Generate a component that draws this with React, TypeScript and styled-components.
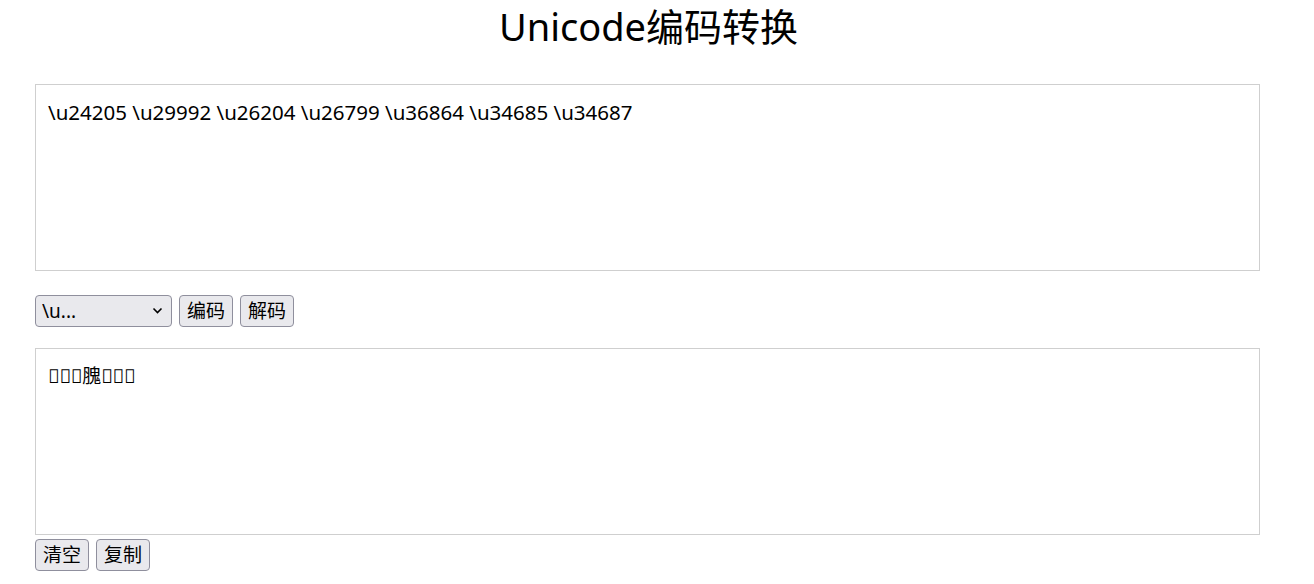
import React, { useState } from "react";
import styled, { createGlobalStyle } from "styled-components";

const GlobalStyle = createGlobalStyle`
  html, body {
    margin: 0;
    padding: 0;
    background: #ffffff;
  }
  body {
    font-family: "Noto Sans", "Noto Sans CJK SC", sans-serif;
    color: #000;
  }
`;

const FONT = `"Noto Sans", "Noto Sans CJK SC", sans-serif`;

/* =========================
   LAYOUT
========================= */

const Page = styled.main`
  width: 1297px;
  padding-top: 1px;
`;

const Title = styled.h1`
  margin: 0;
  height: 52px;
  line-height: 50px;
  text-align: center;
  font-size: 38px;
  font-weight: 400;
  font-family: ${FONT};
`;

const Content = styled.div`
  margin: 31px 0 0 35px;
  width: 1225px;
  display: flex;
  flex-direction: column;
`;

const TextBox = styled.textarea<{ $size: number }>`
  box-sizing: border-box;
  width: 1225px;
  height: 187px;
  margin: 0;
  padding: 14px 12px 10px;
  border: 1px solid #cfcfcf;
  border-radius: 0;
  resize: none;
  outline: none;
  font-family: ${FONT};
  font-size: ${(p) => p.$size}px;
  line-height: 26px;
  color: #000;
`;

const Toolbar = styled.div<{ $top: number; $bottom: number }>`
  display: flex;
  align-items: center;
  gap: 7px;
  margin: ${(p) => p.$top}px 0 ${(p) => p.$bottom}px;
`;

const SelectWrap = styled.div`
  position: relative;
  width: 137px;
  height: 32px;
`;

const Select = styled.select`
  appearance: none;
  box-sizing: border-box;
  width: 100%;
  height: 100%;
  padding: 0 24px 0 6px;
  background: #e9e9ed;
  border: 1px solid #8f8f9d;
  border-radius: 4px;
  font-family: ${FONT};
  font-size: 19px;
  color: #000;
`;

const Chevron = styled.svg`
  position: absolute;
  right: 9px;
  top: 12px;
  pointer-events: none;
`;

const Button = styled.button`
  box-sizing: border-box;
  height: 32px;
  padding: 0 7px;
  background: #e9e9ed;
  border: 1px solid #8f8f9d;
  border-radius: 4px;
  font-family: ${FONT};
  font-size: 19px;
  line-height: 28px;
  color: #000;
`;

/* =========================
   COMPONENT
========================= */

const INPUT = "\\u24205 \\u29992 \\u26204 \\u26799 \\u36864 \\u34685 \\u34687";

const decode = (s: string) =>
  s.replace(/\\u([0-9a-fA-F]+)\s?/g, (_, h) => String.fromCodePoint(parseInt(h, 16)));

const App: React.FC = () => {
  const [input, setInput] = useState(INPUT);
  const [output, setOutput] = useState(decode(INPUT));

  return (
    <Page>
      <GlobalStyle />
      <Title>Unicode编码转换</Title>
      <Content>
        <TextBox $size={20.5} value={input} onChange={(e) => setInput(e.target.value)} />

        <Toolbar $top={24} $bottom={21}>
          <SelectWrap>
            <Select defaultValue="u">
              <option value="u">\u...</option>
              <option value="x">&amp;#x...</option>
            </Select>
            <Chevron width="11" height="8" viewBox="0 0 11 8">
              <path d="M1.5 1.5 L5.5 5.5 L9.5 1.5" fill="none" stroke="#000" strokeWidth="1.6" />
            </Chevron>
          </SelectWrap>
          <Button onClick={() => setOutput(decode(input))}>编码</Button>
          <Button onClick={() => setOutput(decode(input))}>解码</Button>
        </Toolbar>

        <TextBox $size={19} value={output} onChange={(e) => setOutput(e.target.value)} />

        <Toolbar $top={4} $bottom={0}>
          <Button onClick={() => setOutput("")}>清空</Button>
          <Button>复制</Button>
        </Toolbar>
      </Content>
    </Page>
  );
};

export default App;
